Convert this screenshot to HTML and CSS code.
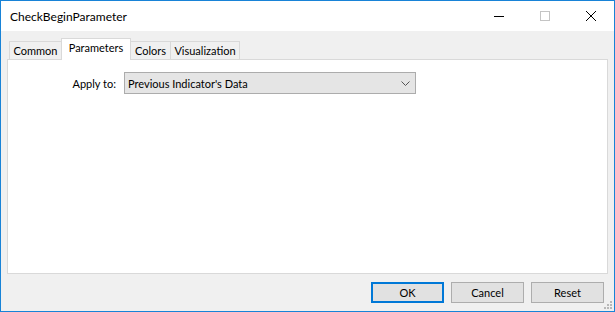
FILE: index.html
```html
<!DOCTYPE html>
<html lang="en">
<head>
    <meta charset="UTF-8">
    <title>CheckBeginParameter</title>
    <link rel="stylesheet" href="styles.css">
</head>
<body>
    <div class="window">
        <div class="titlebar">
            <div class="title">CheckBeginParameter</div>
            <div class="caption-btn">
                <svg width="10" height="10" viewBox="0 0 10 10"><path d="M0 5.5h10" stroke="#000" stroke-width="1"/></svg>
            </div>
            <div class="caption-btn">
                <svg width="10" height="10" viewBox="0 0 10 10"><rect x="0.5" y="0.5" width="9" height="9" fill="none" stroke="#c4c4c4" stroke-width="1"/></svg>
            </div>
            <div class="caption-btn">
                <svg width="10" height="10" viewBox="0 0 10 10"><path d="M0 0L10 10M10 0L0 10" stroke="#000" stroke-width="1"/></svg>
            </div>
        </div>

        <div class="content">
            <!-- tab strip -->
            <div class="tabs">
                <div class="tab tab-common">Common</div>
                <div class="tab tab-params active">Parameters</div>
                <div class="tab tab-colors">Colors</div>
                <div class="tab tab-visual">Visualization</div>
            </div>

            <div class="panel">
                <div class="field">
                    <label class="field-label">Apply to:</label>
                    <div class="select">
                        <span>Previous Indicator's Data</span>
                        <svg width="9" height="5" viewBox="0 0 9 5"><path d="M0.5 0.5L4.5 4.5L8.5 0.5" fill="none" stroke="#555" stroke-width="1"/></svg>
                    </div>
                </div>
            </div>

            <div class="buttons">
                <button class="btn default">OK</button>
                <button class="btn">Cancel</button>
                <button class="btn">Reset</button>
            </div>
        </div>

        <div class="grip">
            <i></i><i></i><i></i><i></i><i></i><i></i>
        </div>
    </div>
</body>
</html>
```

FILE: styles.css
```css
* {
    margin: 0;
    padding: 0;
    box-sizing: border-box;
}

body {
    font-family: Lato, 'Open Sans', sans-serif;
    font-size: 11px;
    color: #000;
    background: #f0f0f0;
}

.window {
    position: relative;
    width: 615px;
    height: 312px;
    border: 1px solid #1883d7;
    background: #f0f0f0;
    display: flex;
    flex-direction: column;
}

.titlebar {
    height: 30px;
    background: #fff;
    display: flex;
    align-items: center;
}

.title {
    flex: 1;
    padding-left: 9px;
    font-size: 12px;
}

.caption-btn {
    width: 46px;
    height: 30px;
    display: flex;
    justify-content: center;
    align-items: center;
}

.content {
    flex: 1;
    padding: 7px 6px 0 6px;
    display: flex;
    flex-direction: column;
}

.tabs {
    display: flex;
    align-items: flex-end;
    height: 21px;
    padding-left: 2px;
}

.tab {
    height: 18px;
    line-height: 17px;
    text-align: center;
    background: #f0f0f0;
    border: 1px solid #d9d9d9;
    border-bottom: none;
    margin-left: -1px;
}

.tab-common { width: 53px; margin-left: 0; }
.tab-params { width: 70px; }
.tab-colors { width: 41px; }
.tab-visual { width: 70px; }

.tab.active {
    position: relative;
    height: 22px;
    line-height: 18px;
    margin-bottom: -1px;
    background: #fff;
    z-index: 1;
}

.panel {
    height: 215px;
    background: #fff;
    border: 1px solid #d9d9d9;
    padding-top: 12px;
}

.field {
    display: flex;
    align-items: center;
}

.field-label {
    width: 116px;
    text-align: right;
    padding-right: 8px;
}

.select {
    width: 292px;
    height: 22px;
    background: #e5e5e5;
    border: 1px solid #acacac;
    display: flex;
    align-items: center;
    justify-content: space-between;
    padding: 0 5px 0 3px;
}

.buttons {
    display: flex;
    justify-content: flex-end;
    gap: 7px;
    padding: 8px 4px 0 0;
}

.btn {
    width: 73px;
    height: 21px;
    font-family: inherit;
    font-size: 11px;
    background: #e1e1e1;
    border: 1px solid #adadad;
}

.btn.default {
    border: 2px solid #0078d7;
}

.grip {
    position: absolute;
    right: 2px;
    bottom: 2px;
    width: 8px;
    height: 8px;
    display: grid;
    grid-template-columns: repeat(3, 2px);
    grid-template-rows: repeat(3, 2px);
    gap: 1px;
}

.grip i {
    background: #b8b8b8;
}

.grip i:nth-child(1) { grid-area: 1 / 3; }
.grip i:nth-child(2) { grid-area: 2 / 2; }
.grip i:nth-child(3) { grid-area: 2 / 3; }
.grip i:nth-child(4) { grid-area: 3 / 1; }
.grip i:nth-child(5) { grid-area: 3 / 2; }
.grip i:nth-child(6) { grid-area: 3 / 3; }
```
